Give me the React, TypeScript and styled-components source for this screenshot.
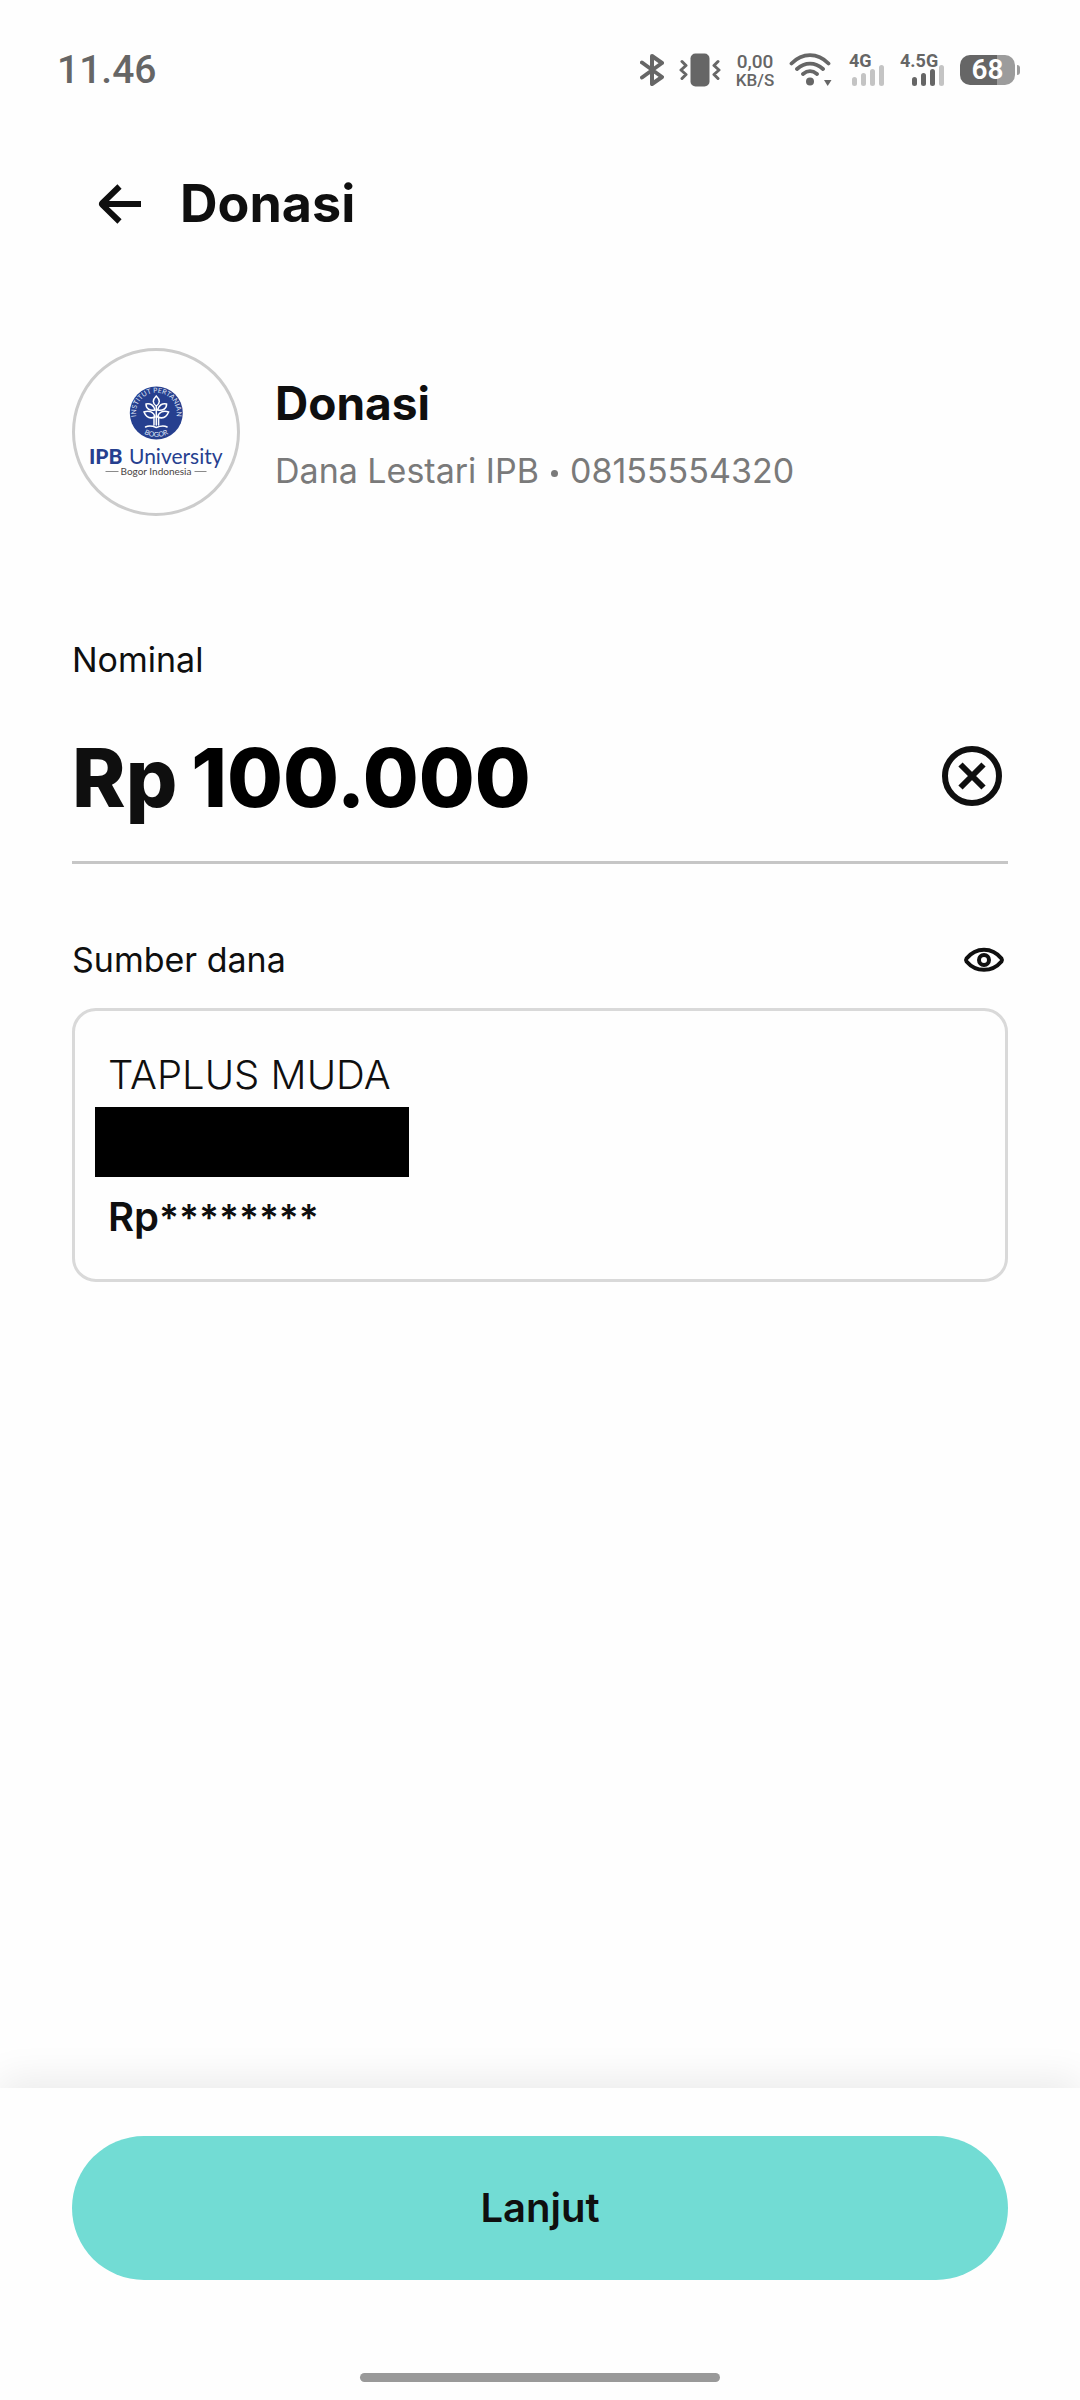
import React, { useState } from "react";
import styled, { createGlobalStyle } from "styled-components";

const ink = "#0f0f0f";
const statusGray = "#666666";
const statusLight = "#c4c4c4";
const brandBlue = "#263f8f";

const GlobalStyle = createGlobalStyle`
  *, *::before, *::after { box-sizing: border-box; }
  body {
    margin: 0;
    background: #fefefe;
    color: ${ink};
    font-family: Inter, Roboto, "Liberation Sans", sans-serif;
  }
  h1, h2, p { margin: 0; }
  button, input {
    margin: 0;
    padding: 0;
    border: 0;
    background: none;
    color: inherit;
    font: inherit;
  }
  button { cursor: pointer; }
  svg { display: block; flex: none; }
`;

const Page = styled.div`
  display: flex;
  flex-direction: column;
  min-height: 100vh;
`;

const StatusBar = styled.div`
  display: flex;
  align-items: center;
  justify-content: space-between;
  height: 132px;
  padding: 8px 60px 0 57px;
  color: ${statusGray};
  font-family: Roboto, sans-serif;
`;

const Clock = styled.time`
  font-size: 39px;
  font-weight: 500;
  line-height: 48px;
`;

const StatusIcons = styled.div`
  display: flex;
  align-items: center;
  gap: 15px;
`;

const NetSpeed = styled.div`
  display: flex;
  flex-direction: column;
  align-items: center;
  width: 38px;
  font-size: 17px;
  font-weight: 500;
  line-height: 16px;
  white-space: nowrap;
`;

const SpeedValue = styled.span`
  font-size: 19px;
  line-height: 20px;
`;

const SignalBox = styled.div<{ $width: number }>`
  display: flex;
  flex-direction: column;
  align-items: flex-end;
  width: ${(p) => p.$width}px;
  height: 34px;
`;

const SignalLabel = styled.span`
  align-self: flex-start;
  height: 12px;
  font-size: 18px;
  font-weight: 700;
  line-height: 16px;
`;

const BatteryBox = styled.div`
  display: flex;
  align-items: center;
  gap: 2px;
`;

const BatteryLevel = styled.div`
  display: flex;
  align-items: center;
  justify-content: center;
  width: 55px;
  height: 30px;
  border-radius: 10px;
  background: linear-gradient(to right, ${statusGray} 68%, #9c9c9c 68%);
  color: #ffffff;
  font-size: 28px;
  font-weight: 600;
  line-height: 30px;
`;

const BatteryTip = styled.span`
  width: 3px;
  height: 10px;
  border-radius: 0 3px 3px 0;
  background: #9c9c9c;
`;

const TopBar = styled.header`
  display: flex;
  align-items: center;
  gap: 36px;
  height: 144px;
  padding: 0 96px;
`;

const IconButton = styled.button`
  display: flex;
  align-items: center;
  justify-content: center;
`;

const ClearButton = styled(IconButton)`
  margin-bottom: 4px;
`;

const PageTitle = styled.h1`
  font-size: 52px;
  font-weight: 700;
  line-height: 60px;
`;

const Content = styled.main`
  flex: 1;
  padding: 72px 72px 48px;
`;

const Recipient = styled.section`
  display: flex;
  align-items: center;
  gap: 35px;
`;

const RecipientText = styled.div`
  padding-top: 3px;
`;

const LogoCircle = styled.div`
  flex: none;
  width: 168px;
  height: 168px;
  overflow: hidden;
  border: 3px solid #cccccc;
  border-radius: 50%;
`;

const RecipientName = styled.h2`
  font-size: 46px;
  font-weight: 700;
  line-height: 60px;
`;

const RecipientDetail = styled.p`
  display: flex;
  align-items: center;
  gap: 12px;
  margin-top: 14px;
  color: #7a7a7a;
  font-size: 34px;
  font-weight: 400;
  line-height: 48px;
`;

const Dot = styled.span`
  width: 7px;
  height: 7px;
  margin-top: 6px;
  border-radius: 50%;
  background: currentColor;
`;

const Field = styled.section<{ $gap: number }>`
  margin-top: ${(p) => p.$gap}px;
`;

const FieldHead = styled.div`
  display: flex;
  align-items: center;
  justify-content: space-between;
  padding-right: 3px;
`;

const FieldLabel = styled.label`
  font-size: 34px;
  font-weight: 400;
  line-height: 48px;
`;

const AmountRow = styled.div`
  display: flex;
  align-items: center;
  margin-top: 44px;
  padding: 0 6px 33px 0;
  border-bottom: 3px solid #c6c6c6;
  font-size: 81px;
  font-weight: 800;
  line-height: 100px;
`;

const AmountInput = styled.input`
  flex: 1;
  min-width: 0;
  height: 100px;
  margin-left: 14px;
  color: #000000;
  outline: none;
`;

const AccountCard = styled.button`
  display: block;
  width: 100%;
  margin-top: 24px;
  padding: 36px 20px 34px;
  border: 3px solid #d9d9d9;
  border-radius: 24px;
  font-size: 40px;
  line-height: 56px;
  text-align: left;
`;

const AccountText = styled.span<{ $bold?: boolean }>`
  display: block;
  padding-left: 13px;
  font-weight: ${(p) => (p.$bold ? 600 : 300)};
`;

const Mask = styled.span`
  font-size: 37px;
  line-height: 40px;
`;

const HiddenNumber = styled.span`
  display: block;
  width: 314px;
  height: 70px;
  margin: 4px 0 12px;
  background: #000000;
`;

const BottomBar = styled.footer`
  display: flex;
  flex-direction: column;
  align-items: center;
  gap: 93px;
  padding: 48px 72px 18px;
  background: #fefefe;
  box-shadow: 0 -9px 36px rgba(0, 0, 0, 0.08);
`;

const ContinueButton = styled.button`
  width: 100%;
  height: 144px;
  border-radius: 72px;
  background: #72dcd4;
  font-size: 40px;
  font-weight: 600;
  line-height: 56px;
`;

const HomeIndicator = styled.div`
  width: 360px;
  height: 9px;
  border-radius: 5px;
  background: #999999;
`;

function BluetoothIcon() {
  return (
    <svg width="24" height="34" viewBox="0 0 24 34" fill="none" stroke={statusGray} strokeWidth="4" strokeLinecap="round" strokeLinejoin="round">
      <path d="M2 9.500 22 24 12 31V3l10 7L2 24.500" />
    </svg>
  );
}

function VibrateIcon() {
  return (
    <svg width="42" height="34" viewBox="0 0 42 34" fill="none" stroke={statusGray} strokeWidth="3" strokeLinecap="round" strokeLinejoin="round">
      <rect x="11.500" y="0.500" width="19" height="33" rx="5" fill={statusGray} stroke="none" />
      <path d="M3 8.500l4 4-5 4.500 5 4.500-4 4M39 8.500l-4 4 5 4.500-5 4.500 4 4" />
    </svg>
  );
}

function WifiIcon() {
  return (
    <svg width="45" height="34" viewBox="0 0 45 34" fill="none" stroke={statusGray} strokeWidth="3.800" strokeLinecap="round">
      <path d="M2.500 10.500C13.500-.6 28.500-.6 39.500 10.500M8 16c8-7.300 18-7.300 26 0M14 21c4.500-3.700 9.500-3.700 14 0" />
      <circle cx="21" cy="28.500" r="4" fill={statusGray} stroke="none" />
      <path d="M35 27h7.500L38.700 33z" fill={statusGray} stroke="none" />
    </svg>
  );
}

function Signal({ label, width, level }: { label: string; width: number; level: number }) {
  const heights = [9, 13, 17, 21];
  return (
    <SignalBox $width={width}>
      <SignalLabel>{label}</SignalLabel>
      <svg width="34" height="22" viewBox="0 0 34 22">
        {heights.map((h, i) => (
          <rect key={h} x={1 + i * 9} y={21 - h} width="5" height={h} rx="2.500" fill={i < level ? statusGray : statusLight} />
        ))}
      </svg>
    </SignalBox>
  );
}

function BackIcon() {
  return (
    <svg width="48" height="48" viewBox="0 0 48 48" fill="none" stroke={ink} strokeWidth="6">
      <path d="M45 24H8M23.500 6.500 6.500 23c-.6.600-.6 1.400 0 2l17 16.500" />
    </svg>
  );
}

function ClearIcon() {
  return (
    <svg width="60" height="60" viewBox="0 0 60 60" fill="none" stroke={ink} strokeWidth="6">
      <circle cx="30" cy="30" r="27" />
      <path d="M18.500 18.500l23 23M41.500 18.500l-23 23" />
    </svg>
  );
}

function EyeIcon() {
  return (
    <svg width="42" height="26" viewBox="0 0 42 26" fill="none" stroke={ink} strokeWidth="4" strokeLinejoin="round">
      <path d="M3.500 11.500C13-.2 29-.2 38.500 11.500q1 1.500 0 3C29 25.600 13 25.600 3.500 14.500q-1-1.500 0-3z" />
      <circle cx="21" cy="13" r="5" />
    </svg>
  );
}

function UniversityLogo() {
  return (
    <svg width="162" height="162" viewBox="0 0 162 162" role="img" aria-label="IPB University">
      <defs>
        <path id="sealTop" d="M65.700 75A20.300 20.300 0 1 1 96.900 75" />
        <path id="sealBottom" d="M64.300 79A24 24 0 0 0 98.300 79" />
      </defs>
      <circle cx="81.300" cy="62" r="26.500" fill={brandBlue} />
      <g fill="#dfe4f5" fontFamily="Lato, sans-serif" fontSize="7">
        <text textAnchor="middle">
          <textPath href="#sealTop" startOffset="50%">INSTITUT PERTANIAN</textPath>
        </text>
        <text textAnchor="middle">
          <textPath href="#sealBottom" startOffset="50%">BOGOR</textPath>
        </text>
      </g>
      <g fill="none" stroke="#ffffff" strokeWidth="1.500" strokeLinecap="round">
        <path d="M81.300 45c-4 4-4 7 0 10 4-3 4-6 0-10zM81.300 55v19" />
        <path d="M80 59c-1-5-5-7-9-6 0 5 4 7 9 6zM82.600 59c1-5 5-7 9-6 0 5-4 7-9 6z" />
        <path d="M80 66c-1-5-6-7-11-5 2 5 6 7 11 5zM82.600 66c1-5 6-7 11-5-2 5-6 7-11 5z" />
        <path d="M79 66v8M83.600 66v8M70.500 76c4-2 7-1 10.800.500 3.800-1.500 7-2.500 10.800-.5" />
      </g>
      <g fill={brandBlue} fontFamily="Lato, sans-serif" fontSize="21">
        <text x="14" y="113" fontWeight="900">IPB</text>
        <text x="54" y="113">University</text>
      </g>
      <text x="81" y="124" textAnchor="middle" fill="#4a4444" fontFamily="Lato, sans-serif" fontSize="10">Bogor Indonesia</text>
      <path d="M30.500 120.500h13M119.500 120.500h12" stroke="#8a8a8a" strokeWidth="1" />
    </svg>
  );
}

export default function App() {
  const [amount, setAmount] = useState("100.000");
  const [visible, setVisible] = useState(false);

  return (
    <>
      <GlobalStyle />
      <Page>
        <StatusBar>
          <Clock>11.46</Clock>
          <StatusIcons>
            <BluetoothIcon />
            <VibrateIcon />
            <NetSpeed>
              <SpeedValue>0,00</SpeedValue>
              <span>KB/S</span>
            </NetSpeed>
            <WifiIcon />
            <Signal label="4G" width={36} level={0} />
            <Signal label="4.5G" width={45} level={3} />
            <BatteryBox>
              <BatteryLevel>68</BatteryLevel>
              <BatteryTip />
            </BatteryBox>
          </StatusIcons>
        </StatusBar>

        <TopBar>
          <IconButton type="button" aria-label="Kembali">
            <BackIcon />
          </IconButton>
          <PageTitle>Donasi</PageTitle>
        </TopBar>

        <Content>
          <Recipient>
            <LogoCircle>
              <UniversityLogo />
            </LogoCircle>
            <RecipientText>
              <RecipientName>Donasi</RecipientName>
              <RecipientDetail>
                <span>Dana Lestari IPB</span>
                <Dot />
                <span>08155554320</span>
              </RecipientDetail>
            </RecipientText>
          </Recipient>

          <Field $gap={120}>
            <FieldHead>
              <FieldLabel htmlFor="amount">Nominal</FieldLabel>
            </FieldHead>
            <AmountRow>
              <span>Rp</span>
              <AmountInput id="amount" inputMode="numeric" value={amount} onChange={(e) => setAmount(e.target.value)} />
              <ClearButton type="button" aria-label="Hapus nominal" onClick={() => setAmount("")}>
                <ClearIcon />
              </ClearButton>
            </AmountRow>
          </Field>

          <Field $gap={72}>
            <FieldHead>
              <FieldLabel htmlFor="account">Sumber dana</FieldLabel>
              <IconButton type="button" aria-label="Tampilkan saldo" aria-pressed={visible} onClick={() => setVisible(!visible)}>
                <EyeIcon />
              </IconButton>
            </FieldHead>
            <AccountCard id="account" type="button">
              <AccountText>TAPLUS MUDA</AccountText>
              <HiddenNumber />
              <AccountText $bold>
                Rp<Mask>********</Mask>
              </AccountText>
            </AccountCard>
          </Field>
        </Content>

        <BottomBar>
          <ContinueButton type="button">Lanjut</ContinueButton>
          <HomeIndicator />
        </BottomBar>
      </Page>
    </>
  );
}
